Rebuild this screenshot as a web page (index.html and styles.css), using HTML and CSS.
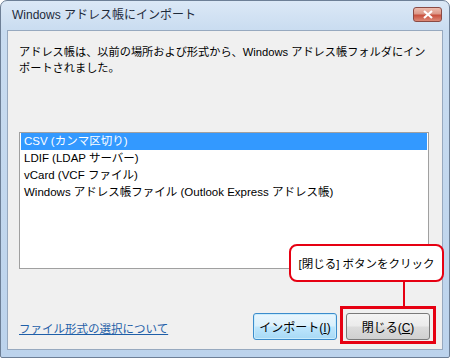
FILE: index.html
```html
<!DOCTYPE html>
<html lang="ja">
<head>
<meta charset="UTF-8">
<title>Windows アドレス帳にインポート</title>
<link rel="stylesheet" href="styles.css">
</head>
<body>
<div class="window">
  <div class="titlebar">
    <span class="title">Windows アドレス帳にインポート</span>
    <span class="close-x">
      <svg width="14" height="9" viewBox="0 0 14 9"><path d="M3 1 L11 8 M11 1 L3 8" stroke="#fff" stroke-width="2.2"/></svg>
    </span>
  </div>
  <div class="panel">
    <p class="message">アドレス帳は、以前の場所および形式から、Windows アドレス帳フォルダにインポートされました。</p>
    <ul class="listbox">
      <li class="selected">CSV (カンマ区切り)</li>
      <li>LDIF (LDAP サーバー)</li>
      <li>vCard (VCF ファイル)</li>
      <li>Windows アドレス帳ファイル (Outlook Express アドレス帳)</li>
    </ul>
    <div class="footer">
      <a class="help-link" href="#">ファイル形式の選択について</a>
      <div class="buttons">
        <button class="btn btn-default">インポート(<u>I</u>)</button>
        <button class="btn">閉じる(<u>C</u>)</button>
      </div>
    </div>
  </div>

  <!-- annotation -->
  <div class="callout">[閉じる] ボタンをクリック</div>
  <div class="callout-line"></div>
  <div class="mark-box"></div>
</div>
</body>
</html>
```

FILE: styles.css
```css
*{margin:0;padding:0;box-sizing:border-box;}
body{width:450px;height:358px;background:#fff;font-family:"Liberation Sans","Noto Sans CJK JP",sans-serif;font-size:11.5px;color:#000;overflow:hidden;}

.window{position:relative;width:450px;height:358px;display:flex;flex-direction:column;
  border:1px solid #6d7f96;border-radius:7px 7px 2px 2px;
  background:linear-gradient(#dbe8f6 0,#c9dcf0 30px,#bcd3ec 100%);}
.titlebar{height:29px;display:flex;align-items:center;justify-content:space-between;padding:0 7px 0 11px;}
.title{font-size:12px;color:#1e2a3a;margin-top:-4px;}
.close-x{width:29px;height:15px;margin-top:-3px;display:flex;align-items:center;justify-content:center;
  border:1px solid #8a4a44;border-radius:3px;
  background:linear-gradient(#eebcae 0,#dc9888 45%,#c9503d 55%,#dc8a78 100%);}

.panel{flex:1;margin:0 6px 7px 6px;background:#f0f0f0;border:1px solid #97a9bf;
  display:flex;flex-direction:column;padding:13px 9px 9px 11px;}
.message{line-height:16px;font-size:11.2px;line-break:anywhere;}

.listbox{list-style:none;margin-top:56px;width:410px;height:137px;background:#fff;border:1px solid #a0a0a0;padding:0 1px;}
.listbox li{height:17px;line-height:17px;padding-left:3px;white-space:nowrap;}
.listbox li.selected{background:#3399ff;color:#fff;}

.footer{margin-top:auto;display:flex;align-items:center;justify-content:space-between;padding-right:3px;}
.help-link{color:#1f5fa8;text-decoration:underline;margin-top:3px;}
.buttons{display:flex;gap:9px;}
.btn{height:27px;width:84px;font:inherit;font-size:12px;color:#000;border-radius:3px;
  border:1px solid #7a7a7a;background:linear-gradient(#f4f4f4 0,#ebebeb 48%,#dcdcdc 52%,#d0d0d0 100%);}
.btn-default{border-color:#3c8ccc;background:linear-gradient(#eaf6fd 0,#d9f0fc 48%,#bee6fd 52%,#a7d9f5 100%);box-shadow:inset 0 0 0 1px #c9ecfc;}
.btn u{text-decoration:underline;}

.callout{position:absolute;left:288px;top:243px;width:155px;height:38px;background:#fff;border:2px solid #e60012;border-radius:8px;
  display:flex;align-items:center;justify-content:center;font-size:11.5px;}
.callout-line{position:absolute;left:402px;top:281px;width:2px;height:25px;background:#e60012;}
.mark-box{position:absolute;left:339px;top:305px;width:96px;height:38px;border:3px solid #e60012;}
```
